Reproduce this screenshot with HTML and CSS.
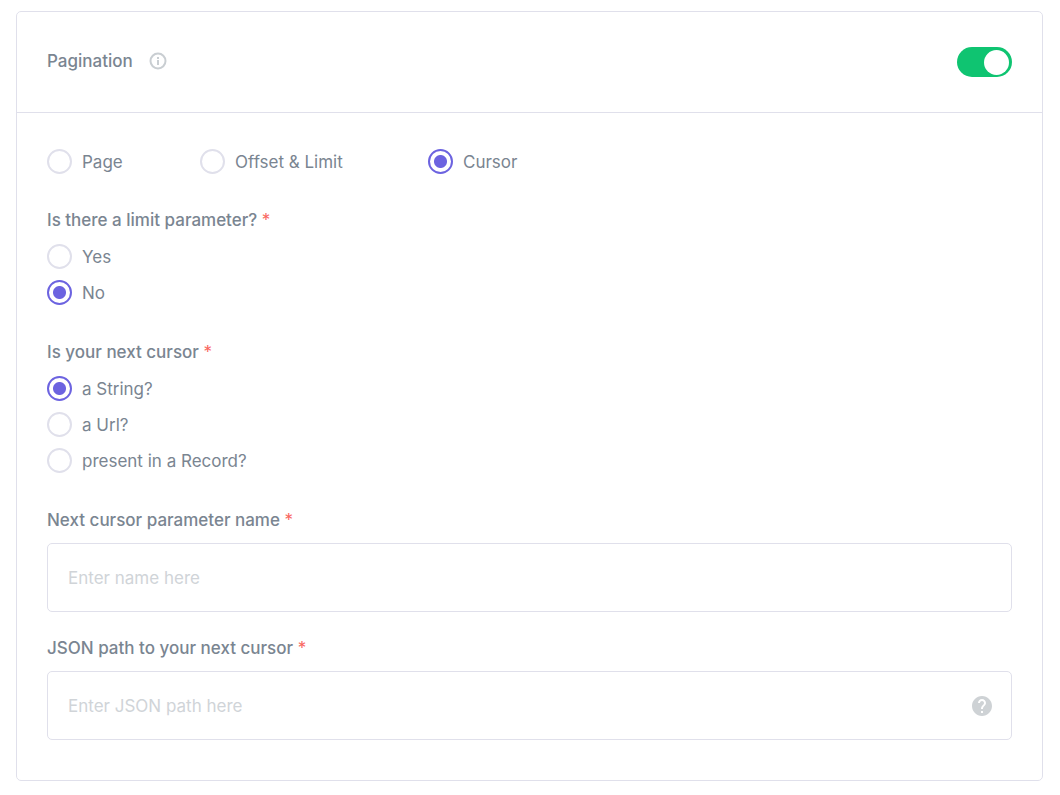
FILE: index.html
```html
<!DOCTYPE html>
<html lang="en">
<head>
<meta charset="utf-8">
<title>Pagination</title>
<meta name="viewport" content="width=device-width, initial-scale=1">
<link rel="stylesheet" href="styles.css">
</head>
<body>
<form class="card">
  <header class="card-header">
    <div class="heading">
      <label class="title" for="pagination">Pagination</label>
      <svg class="info" viewBox="0 0 18 18" aria-hidden="true"><circle cx="9" cy="9" r="7.500"/><path d="M9 8v5M9 5v2"/></svg>
    </div>
    <input class="switch" id="pagination" type="checkbox" role="switch" checked>
  </header>
  <div class="card-body">
    <div class="types" role="radiogroup" aria-label="Pagination">
      <label class="option"><input class="radio" type="radio" name="type">Page</label>
      <label class="option"><input class="radio" type="radio" name="type">Offset &amp; Limit</label>
      <label class="option"><input class="radio" type="radio" name="type" checked>Cursor</label>
    </div>
    <fieldset class="group">
      <legend class="label">Is there a limit parameter? <span class="required">*</span></legend>
      <div class="options">
        <label class="option"><input class="radio" type="radio" name="limit">Yes</label>
        <label class="option"><input class="radio" type="radio" name="limit" checked>No</label>
      </div>
    </fieldset>
    <fieldset class="group">
      <legend class="label">Is your next cursor <span class="required">*</span></legend>
      <div class="options">
        <label class="option"><input class="radio" type="radio" name="cursor" checked>a String?</label>
        <label class="option"><input class="radio" type="radio" name="cursor">a Url?</label>
        <label class="option"><input class="radio" type="radio" name="cursor">present in a Record?</label>
      </div>
    </fieldset>
    <div class="fields">
      <div class="field">
        <label class="label" for="cursor-name">Next cursor parameter name <span class="required">*</span></label>
        <div class="control"><input class="text" id="cursor-name" type="text" placeholder="Enter name here"></div>
      </div>
      <div class="field">
        <label class="label" for="cursor-path">JSON path to your next cursor <span class="required">*</span></label>
        <div class="control">
          <input class="text" id="cursor-path" type="text" placeholder="Enter JSON path here">
          <svg class="help" viewBox="2 2 20 20" aria-hidden="true"><path d="M12 2C6.480 2 2 6.480 2 12s4.480 10 10 10 10-4.480 10-10S17.520 2 12 2zm1 17h-2v-2h2v2zm2.070-7.750l-.9.920C13.450 12.900 13 13.500 13 15h-2v-.5c0-1.100.450-2.100 1.170-2.830l1.240-1.260c.370-.360.590-.860.590-1.410 0-1.100-.9-2-2-2s-2 .9-2 2H8c0-2.210 1.790-4 4-4s4 1.790 4 4c0 .880-.360 1.680-.930 2.250z"/></svg>
        </div>
      </div>
    </div>
  </div>
</form>
</body>
</html>
```
FILE: styles.css
```css
* {
  box-sizing: border-box;
}

body {
  margin: 11px 17px 14px 16px;
  background: #fff;
  color: #7a8591;
  font: 400 17px/24px Inter, "Liberation Sans", sans-serif;
}

.card {
  border: 1px solid #e0e0eb;
  border-radius: 5px;
}

.card-header {
  display: flex;
  justify-content: space-between;
  align-items: center;
  padding: 35px 30px;
  border-bottom: 1px solid #e0e0eb;
}

.heading {
  display: flex;
  align-items: center;
  gap: 16px;
  padding-bottom: 3px;
}

.title,
.label {
  font-weight: 500;
}

.info {
  width: 18px;
  height: 18px;
  fill: none;
  stroke: #c9ced2;
  stroke-width: 2;
}

.switch {
  appearance: none;
  display: flex;
  justify-content: flex-end;
  align-items: center;
  width: 55px;
  height: 30px;
  margin: 0;
  padding: 0 3px;
  border-radius: 15px;
  background: #0fc471;
}

.switch::before {
  content: "";
  width: 25px;
  height: 25px;
  border-radius: 50%;
  background: #fff;
}

.card-body {
  padding: 36px 30px 40px;
}

.types {
  display: grid;
  grid-template-columns: 153px 228px auto;
  margin-bottom: 34px;
}

.option {
  display: flex;
  align-items: center;
  gap: 10px;
}

.radio {
  appearance: none;
  flex: none;
  width: 25px;
  height: 25px;
  margin: 0;
  border: 2px solid #e0e0eb;
  border-radius: 50%;
}

.radio:checked {
  border-color: #6c63e0;
  background: radial-gradient(circle, #6c63e0 6px, #fff 7px);
}

.group {
  min-width: 0;
  margin: 0 0 35px;
  padding: 0;
  border: 0;
}

.label {
  display: block;
  padding: 0;
}

.required {
  color: #f9665e;
  font-weight: 400;
}

.options {
  display: grid;
  gap: 11px;
  padding-top: 12px;
}

.fields {
  display: grid;
  gap: 24px;
}

.field {
  display: grid;
  gap: 11px;
}

.control {
  display: flex;
  align-items: center;
  padding: 0 19px 0 20px;
  border: 1px solid #e0e0eb;
  border-radius: 5px;
}

.text {
  flex: 1;
  min-width: 0;
  height: 67px;
  padding: 0;
  border: 0;
  outline: 0;
  background: none;
  color: inherit;
  font: inherit;
}

.text::placeholder {
  color: #d0d4d8;
  opacity: 1;
}

.help {
  width: 20px;
  height: 20px;
  fill: #ced2d5;
}
```
